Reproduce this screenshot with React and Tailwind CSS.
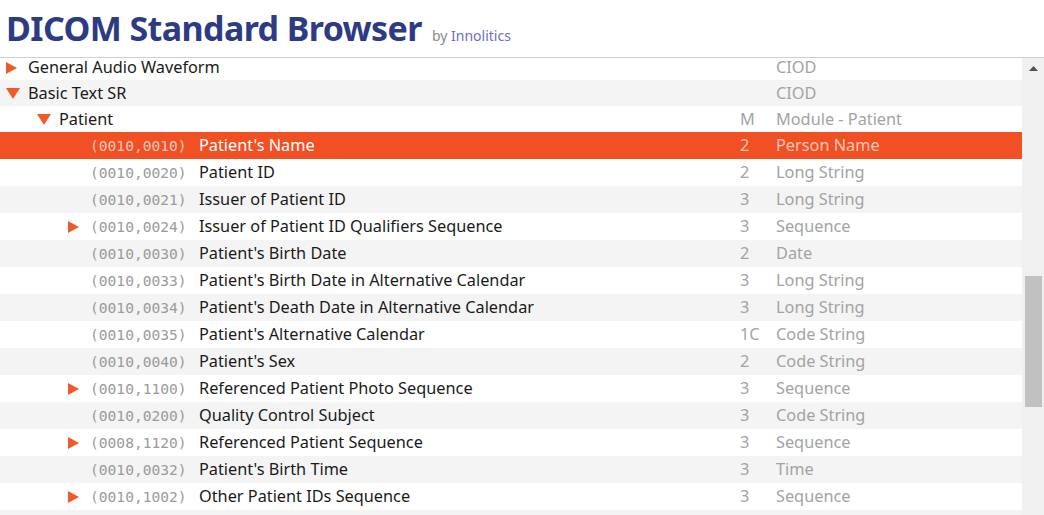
import React from 'react';

const rows = [
  { level: 0, arrow: 'right', name: 'General Audio Waveform', type: 'CIOD' },
  { level: 0, arrow: 'down', name: 'Basic Text SR', type: 'CIOD' },
  { level: 1, arrow: 'down', name: 'Patient', usage: 'M', type: 'Module - Patient' },
  { level: 2, tag: '(0010,0010)', name: "Patient's Name", usage: '2', type: 'Person Name', selected: true },
  { level: 2, tag: '(0010,0020)', name: 'Patient ID', usage: '2', type: 'Long String' },
  { level: 2, tag: '(0010,0021)', name: 'Issuer of Patient ID', usage: '3', type: 'Long String' },
  { level: 2, arrow: 'right', tag: '(0010,0024)', name: 'Issuer of Patient ID Qualifiers Sequence', usage: '3', type: 'Sequence' },
  { level: 2, tag: '(0010,0030)', name: "Patient's Birth Date", usage: '2', type: 'Date' },
  { level: 2, tag: '(0010,0033)', name: "Patient's Birth Date in Alternative Calendar", usage: '3', type: 'Long String' },
  { level: 2, tag: '(0010,0034)', name: "Patient's Death Date in Alternative Calendar", usage: '3', type: 'Long String' },
  { level: 2, tag: '(0010,0035)', name: "Patient's Alternative Calendar", usage: '1C', type: 'Code String' },
  { level: 2, tag: '(0010,0040)', name: "Patient's Sex", usage: '2', type: 'Code String' },
  { level: 2, arrow: 'right', tag: '(0010,1100)', name: 'Referenced Patient Photo Sequence', usage: '3', type: 'Sequence' },
  { level: 2, tag: '(0010,0200)', name: 'Quality Control Subject', usage: '3', type: 'Code String' },
  { level: 2, arrow: 'right', tag: '(0008,1120)', name: 'Referenced Patient Sequence', usage: '3', type: 'Sequence' },
  { level: 2, tag: '(0010,0032)', name: "Patient's Birth Time", usage: '3', type: 'Time' },
  { level: 2, arrow: 'right', tag: '(0010,1002)', name: 'Other Patient IDs Sequence', usage: '3', type: 'Sequence' },
  { level: 2, empty: true },
];

const indent = ['pl-[6px]', 'pl-[37px]', 'pl-[68px]'];

function Arrow({ dir }) {
  if (dir === 'down') {
    return (
      <svg width="14" height="11" viewBox="0 0 14 11">
        <polygon points="0,0 14,0 7,11" fill="#f05a28" />
      </svg>
    );
  }
  return (
    <svg width="11" height="12" viewBox="0 0 11 12">
      <polygon points="0,0 11,6 0,12" fill="#f05a28" />
    </svg>
  );
}

function Row({ row, index }) {
  const sel = row.selected;
  const bg = sel ? 'bg-[#f05024]' : index % 2 === 1 ? 'bg-[#f4f4f4]' : 'bg-white';
  // first row is scrolled partly under the header
  const h =
    index === 0
      ? 'h-[22px] pb-[3px] leading-[19px]'
      : index === 1 || index === 2
        ? 'h-[26px]'
        : 'h-[27px]';
  if (row.empty) return <div className={`${h} ${bg}`} />;
  const muted = sel ? 'text-[#f7c6b6]' : 'text-[#a3a3a3]';
  return (
    <div className={`flex items-center ${h} ${bg} text-[16.3px]`}>
      <div className={`flex items-center flex-1 min-w-0 ${indent[row.level]}`}>
        <div className="w-[22px] flex items-center shrink-0">
          {row.arrow && <Arrow dir={row.arrow} />}
        </div>
        {row.tag && (
          <span
            className={`w-[109px] shrink-0 text-[14.6px] ${sel ? 'text-[#f7c6b6]' : 'text-[#9b9b9b]'}`}
            style={{ fontFamily: '"DejaVu Sans Mono", monospace' }}
          >
            {row.tag}
          </span>
        )}
        <span className={`whitespace-nowrap ${sel ? 'text-white' : 'text-[#1a1a1a]'}`}>{row.name}</span>
      </div>
      <div className={`w-[36px] shrink-0 ${muted}`}>{row.usage}</div>
      <div className={`w-[246px] shrink-0 whitespace-nowrap ${muted}`}>{row.type}</div>
    </div>
  );
}

export default function App() {
  return (
    <div className="w-[1044px] h-[515px] overflow-hidden bg-white flex flex-col" style={{ fontFamily: '"Noto Sans", "Open Sans", sans-serif' }}>
      <header className="h-[58px] shrink-0 flex items-end pl-[6px] pb-[12px] border-b border-[#cfcfcf]">
        <h1 className="text-[34px] font-bold leading-none text-[#2d3b85] tracking-[-0.6px]">DICOM Standard Browser</h1>
        <span className="ml-[10px] text-[14px] leading-none mb-[2px] text-[#8a8a8a]">
          by <span className="text-[#6a6fc9]">Innolitics</span>
        </span>
      </header>
      <div className="flex flex-1 min-h-0">
        <div className="flex-1 overflow-hidden">
          {rows.map((r, i) => (
            <Row key={i} row={r} index={i} />
          ))}
        </div>
        <div className="w-[22px] shrink-0 bg-[#f0f0f0] flex flex-col items-center">
          <div className="mt-[7px] h-[6px] flex items-center">
            <svg width="9" height="5" viewBox="0 0 9 5">
              <polygon points="4.5,0 9,5 0,5" fill="#505050" />
            </svg>
          </div>
          <div className="mt-[205px] w-[17px] h-[131px] bg-[#c1c1c1]" />
        </div>
      </div>
    </div>
  );
}
